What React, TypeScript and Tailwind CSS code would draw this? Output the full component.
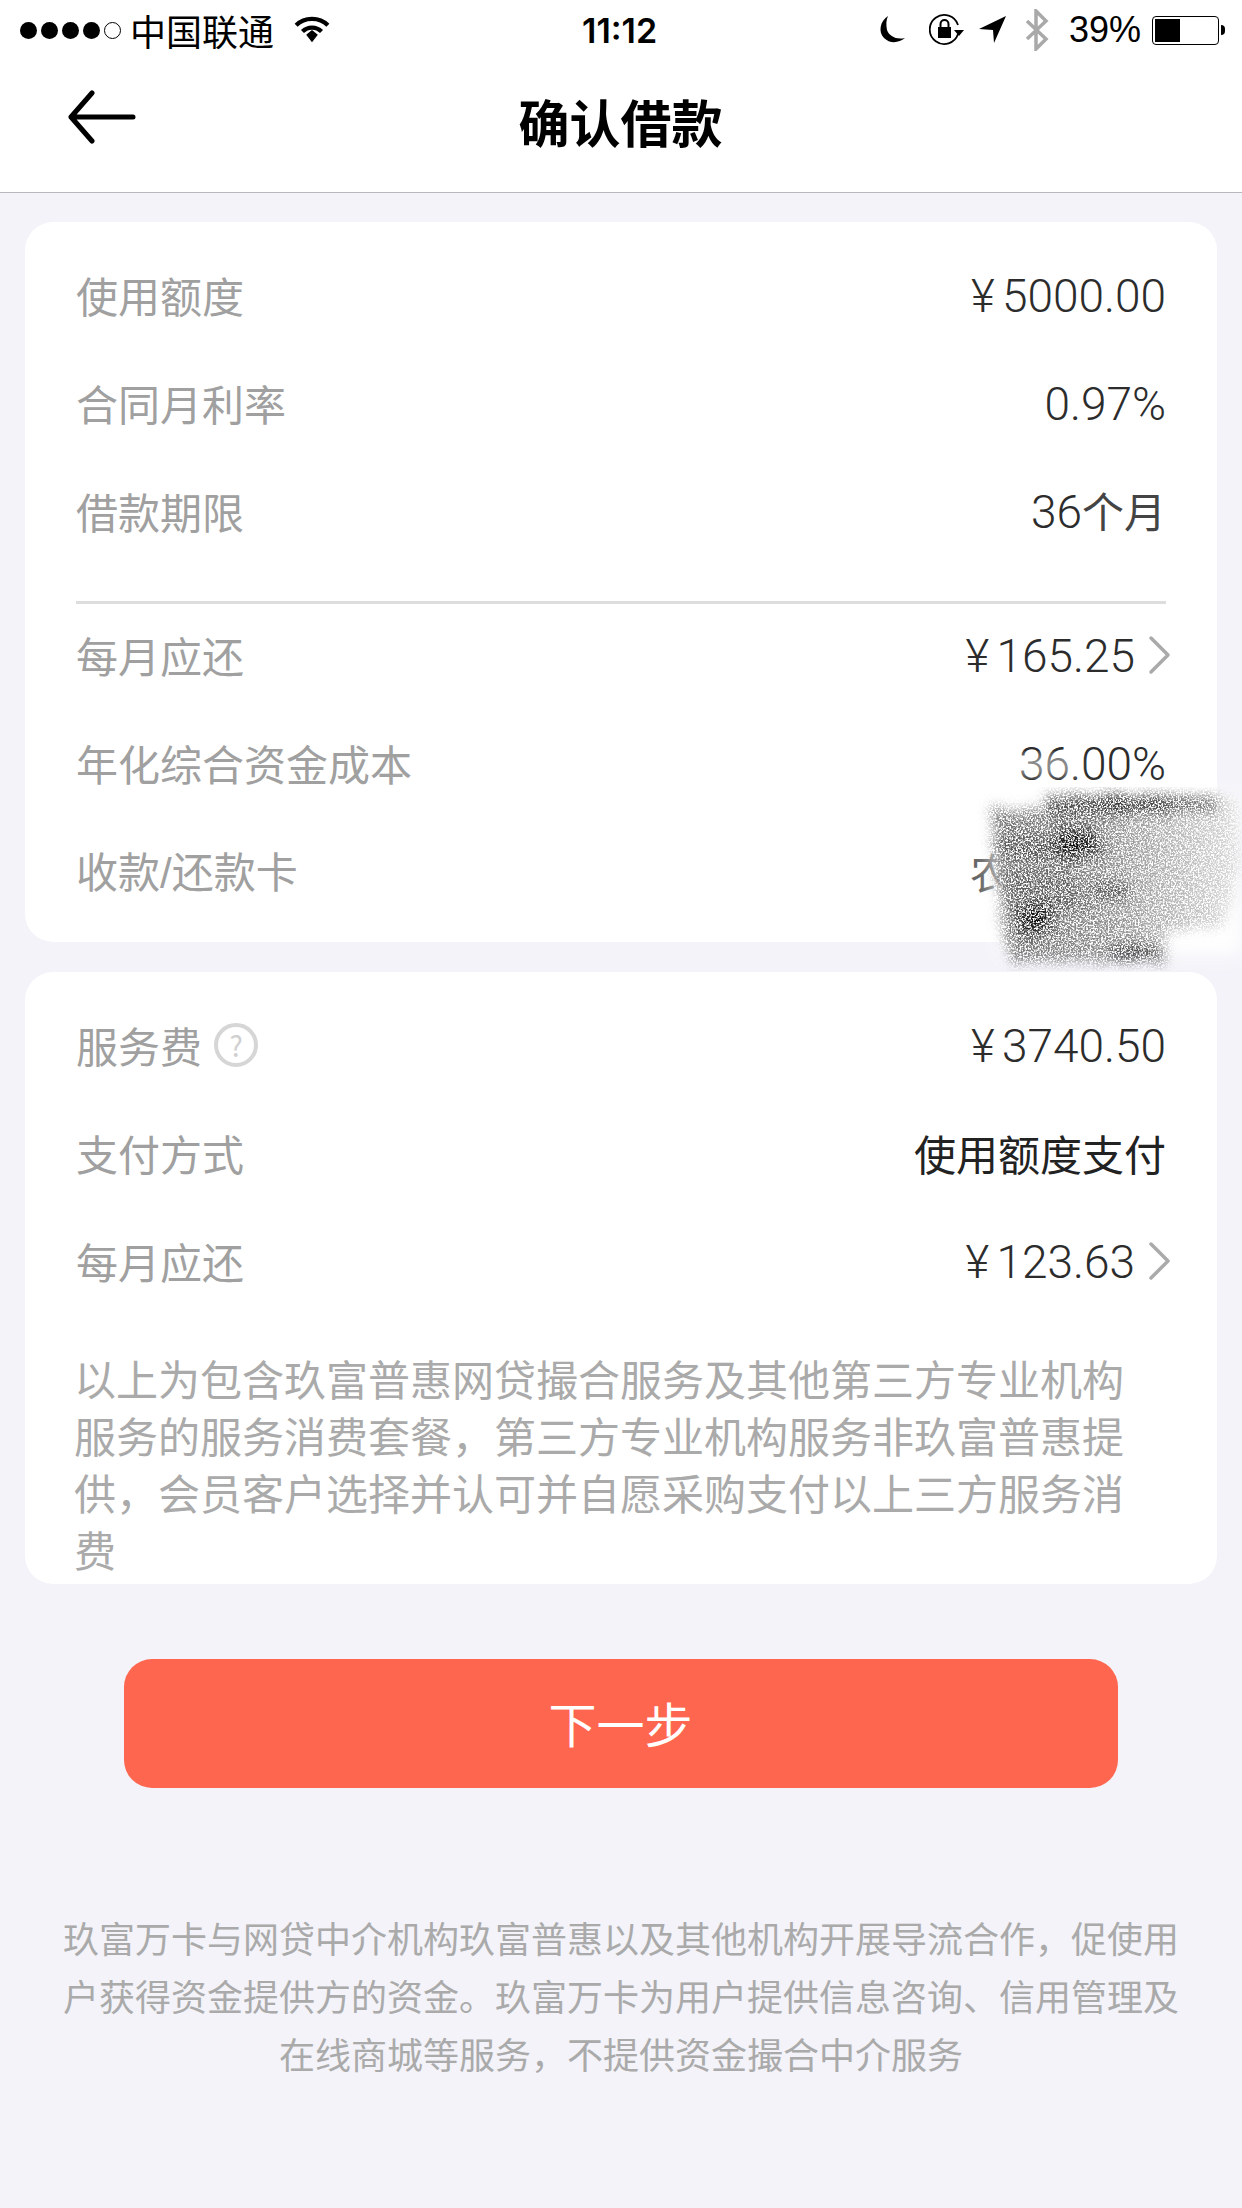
import type { ReactNode } from 'react';

const font = { fontFamily: '"Noto Sans CJK SC", sans-serif' };
const num = { fontFamily: 'Roboto, "Noto Sans CJK SC", sans-serif' };

function Chevron() {
  return (
    <svg width="24" height="40" viewBox="0 0 24 40" className="ml-[13px] mr-[-6px] mt-[-5px]" fill="none">
      <path d="M3 3 L20 20 L3 37" stroke="#aaaaaa" strokeWidth="3.5" strokeLinecap="round" strokeLinejoin="round" />
    </svg>
  );
}

function Row({ label, value, chevron, extra }: { label: string; value: ReactNode; chevron?: boolean; extra?: boolean }) {
  return (
    <div className="h-[108px] flex items-center justify-between">
      <div className="flex items-center text-[#a0a0a0] mt-[-6px]">
        <span>{label}</span>
        {extra && (
          <span className="ml-[12px] mt-[2px] w-[44px] h-[44px] rounded-full border-[4px] border-[#d6d6d6] flex items-center justify-center text-[28px] leading-none text-[#d0d0d0]">?</span>
        )}
      </div>
      <div className="flex items-center text-[46px] font-light text-[#2c2c2c] [word-spacing:-4px]" style={num}>
        <span className="mt-[-2px]">{value}</span>
        {chevron && <Chevron />}
      </div>
    </div>
  );
}

function StatusBar() {
  return (
    <div className="h-[60px] flex items-center justify-between pl-[20px] pr-[17px] text-[35px] text-black relative" style={{ fontFamily: '"Liberation Sans", "Noto Sans CJK SC", sans-serif' }}>
      <div className="flex items-center">
        <div className="flex items-center gap-[4px]">
          <span className="w-[17px] h-[17px] rounded-full bg-black" />
          <span className="w-[17px] h-[17px] rounded-full bg-black" />
          <span className="w-[17px] h-[17px] rounded-full bg-black" />
          <span className="w-[17px] h-[17px] rounded-full bg-black" />
          <span className="w-[17px] h-[17px] rounded-full border border-black" />
        </div>
        <span className="ml-[9px] text-[36px] leading-none mt-[-1px]" style={font}>中国联通</span>
        <svg className="ml-[20px] mt-[-2px]" width="36" height="29" viewBox="0 0 34 26" fill="none">
          <path d="M2 9 C10 1 24 1 32 9" stroke="#000" strokeWidth="4" />
          <path d="M8 15 C13 10 21 10 26 15" stroke="#000" strokeWidth="4" />
          <path d="M11.5 18 L17 13.5 L22.5 18 L17 25 Z" fill="#000" />
        </svg>
      </div>
      <span className="absolute left-[582px] top-[10px] text-[34px] leading-[42px] font-semibold" style={{ fontFamily: 'Inter, sans-serif' }}>11:12</span>
      <div className="flex items-center">
        <svg width="30" height="30" viewBox="0 0 30 30" className="mr-[22px]">
          <path d="M11 1 C3 6 1 17 7 23 C13 29 22 28 28 23 C19 25 12 21 10 15 C9 10 9 5 11 1 Z" fill="#000" />
        </svg>
        <svg width="36" height="34" viewBox="0 0 36 34" fill="none" className="mr-[14px]">
          <path d="M29 21 A14.5 14.5 0 1 1 29 12" stroke="#000" strokeWidth="1.8" />
          <path d="M25 17 L35 17 L30 23 Z" fill="#000" />
          <rect x="9" y="14" width="13" height="11" fill="#000" />
          <path d="M11.5 14 V11 A4 4 0 0 1 19.5 11 V14" stroke="#000" strokeWidth="2" />
        </svg>
        <svg width="28" height="28" viewBox="0 0 28 28" className="mr-[18px]">
          <path d="M27 0 L0 13 L14 14 L15 27 Z" fill="#000" />
        </svg>
        <svg width="24" height="42" viewBox="0 0 24 42" fill="none" className="mr-[20px]">
          <path d="M2 12 L21 30 L11 40 V2 L21 12 L2 30" stroke="#a9a9a9" strokeWidth="3.5" />
        </svg>
        <span className="leading-none text-[36px]">39%</span>
        <div className="ml-[11px] w-[67px] h-[29px] rounded-[4px] border border-black p-[2px] flex">
          <div className="w-[25px] h-full bg-black" />
        </div>
        <span className="w-[4px] h-[10px] bg-black rounded-r-full ml-[2px]" />
      </div>
    </div>
  );
}

function Smudge() {
  return (
    <svg className="absolute left-[960px] top-[740px] pointer-events-none" width="282" height="240" viewBox="0 0 282 240">
      <defs>
        <linearGradient id="fade" gradientUnits="userSpaceOnUse" x1="30" y1="0" x2="280" y2="0">
          <stop offset="0" stopColor="#707070" />
          <stop offset="0.45" stopColor="#8c8c8c" />
          <stop offset="1" stopColor="#dcdcdc" />
        </linearGradient>
        <filter id="grain" x="-5%" y="-5%" width="110%" height="110%">
          <feTurbulence type="fractalNoise" baseFrequency="0.14" numOctaves="3" seed="4" result="w" />
          <feDisplacementMap in="SourceGraphic" in2="w" scale="20" result="d" />
          <feGaussianBlur in="d" stdDeviation="6" result="b" />
          <feTurbulence type="fractalNoise" baseFrequency="0.6" numOctaves="3" seed="7" result="n" />
          <feColorMatrix in="n" type="matrix" values="0 0 0 0 0  0 0 0 0 0  0 0 0 0 0  3.2 3.2 0 0 -2.6" result="g" />
          <feComposite in="b" in2="g" operator="in" />
        </filter>
        <filter id="haze"><feGaussianBlur stdDeviation="9" /></filter>
        <filter id="veil"><feGaussianBlur stdDeviation="4" /></filter>
      </defs>
      <rect x="50" y="14" width="70" height="22" fill="#ffffff" opacity="0.45" filter="url(#veil)" />
      <path d="M30 54 H282 V215 H40 Z" fill="#ffffff" filter="url(#haze)" />
      <g filter="url(#grain)">
        <path d="M32 70 H90 V58 H275 L280 130 L262 186 L205 190 V222 H50 L40 170 Z" fill="url(#fade)" />
        <path d="M86 56 H260 V70 L86 78 Z" fill="#484848" />
        <path d="M130 56 H200 V70 H130 Z" fill="#202020" />
        <path d="M28 100 L110 94 L140 112 L120 122 L50 118 Z" fill="#505050" />
        <path d="M95 86 H135 L145 112 L110 126 L92 108 Z" fill="#101010" />
        <path d="M45 130 H110 L130 170 L60 178 Z" fill="#606060" />
        <path d="M55 165 L92 160 L94 194 L58 198 Z" fill="#101010" />
        <path d="M130 142 H170 V160 H130 Z" fill="#505050" />
        <path d="M150 203 H200 V220 H150 Z" fill="#383838" />
      </g>
    </svg>
  );
}

export default function App() {
  return (
    <div className="w-[1242px] h-[2208px] bg-[#f3f3f9] relative overflow-hidden" style={font}>
      <div className="bg-white h-[193px] border-b border-[#b8b8be]">
        <StatusBar />
        <div className="relative h-[132px] flex items-center justify-center">
          <svg className="absolute left-[68px] top-[30px]" width="68" height="54" viewBox="0 0 68 54" fill="none">
            <path d="M24 3 L3 27 L24 51 M3 27 H65" stroke="#000" strokeWidth="5" strokeLinecap="round" strokeLinejoin="round" />
          </svg>
          <span className="text-[51px] font-bold leading-none text-black mt-[-10px] ml-[-1px]">确认借款</span>
        </div>
      </div>

      <div className="mx-[25px] mt-[29px] bg-white rounded-[28px] h-[720px] px-[51px] text-[42px] pt-[21px]">
        <Row label="使用额度" value="¥ 5000.00" />
        <Row label="合同月利率" value="0.97%" />
        <Row label="借款期限" value={<>36<span className="text-[42px] font-normal text-[#444444]" style={font}>个月</span></>} />
        <div className="h-[3px] bg-[#dddddd] mt-[34px] mb-[-1px]" />
        <Row label="每月应还" value="¥ 165.25" chevron />
        <Row label="年化综合资金成本" value="36.00%" />
        <div className="h-[108px] flex items-center justify-between">
          <span className="text-[#a0a0a0]" style={{ fontFamily: '"Liberation Sans", "Noto Sans CJK SC", sans-serif' }}>收款/还款卡</span>
          <span className="text-[#666666] w-[196px] mt-[-6px]">农</span>
        </div>
      </div>

      <div className="mx-[25px] mt-[30px] bg-white rounded-[28px] h-[612px] px-[51px] text-[42px] pt-[21px] overflow-hidden">
        <Row label="服务费" value="¥ 3740.50" extra />
        <Row label="支付方式" value={<span className="text-[42px] font-normal text-[#222222] block mt-[-4px]" style={font}>使用额度支付</span>} />
        <Row label="每月应还" value="¥ 123.63" chevron />
        <p className="mt-[32px] ml-[-2px] text-[#aaaaaa] leading-[57px] w-[1050px] tracking-[0]">
          以上为包含玖富普惠网贷撮合服务及其他第三方专业机构服务的服务消费套餐，第三方专业机构服务非玖富普惠提供，会员客户选择并认可并自愿采购支付以上三方服务消费
        </p>
      </div>

      <div className="mx-[124px] mt-[75px] h-[129px] rounded-[28px] bg-[#ff6650] flex items-center justify-center text-white text-[48px]">
        <span className="mt-[-4px] ml-[-1px]">下一步</span>
      </div>

      <p className="mx-[59px] mt-[120px] text-center text-[36px] leading-[58px] text-[#aaaaaa]">
        玖富万卡与网贷中介机构玖富普惠以及其他机构开展导流合作，促使用户获得资金提供方的资金。玖富万卡为用户提供信息咨询、信用管理及在线商城等服务，不提供资金撮合中介服务
      </p>

      <Smudge />
    </div>
  );
}
